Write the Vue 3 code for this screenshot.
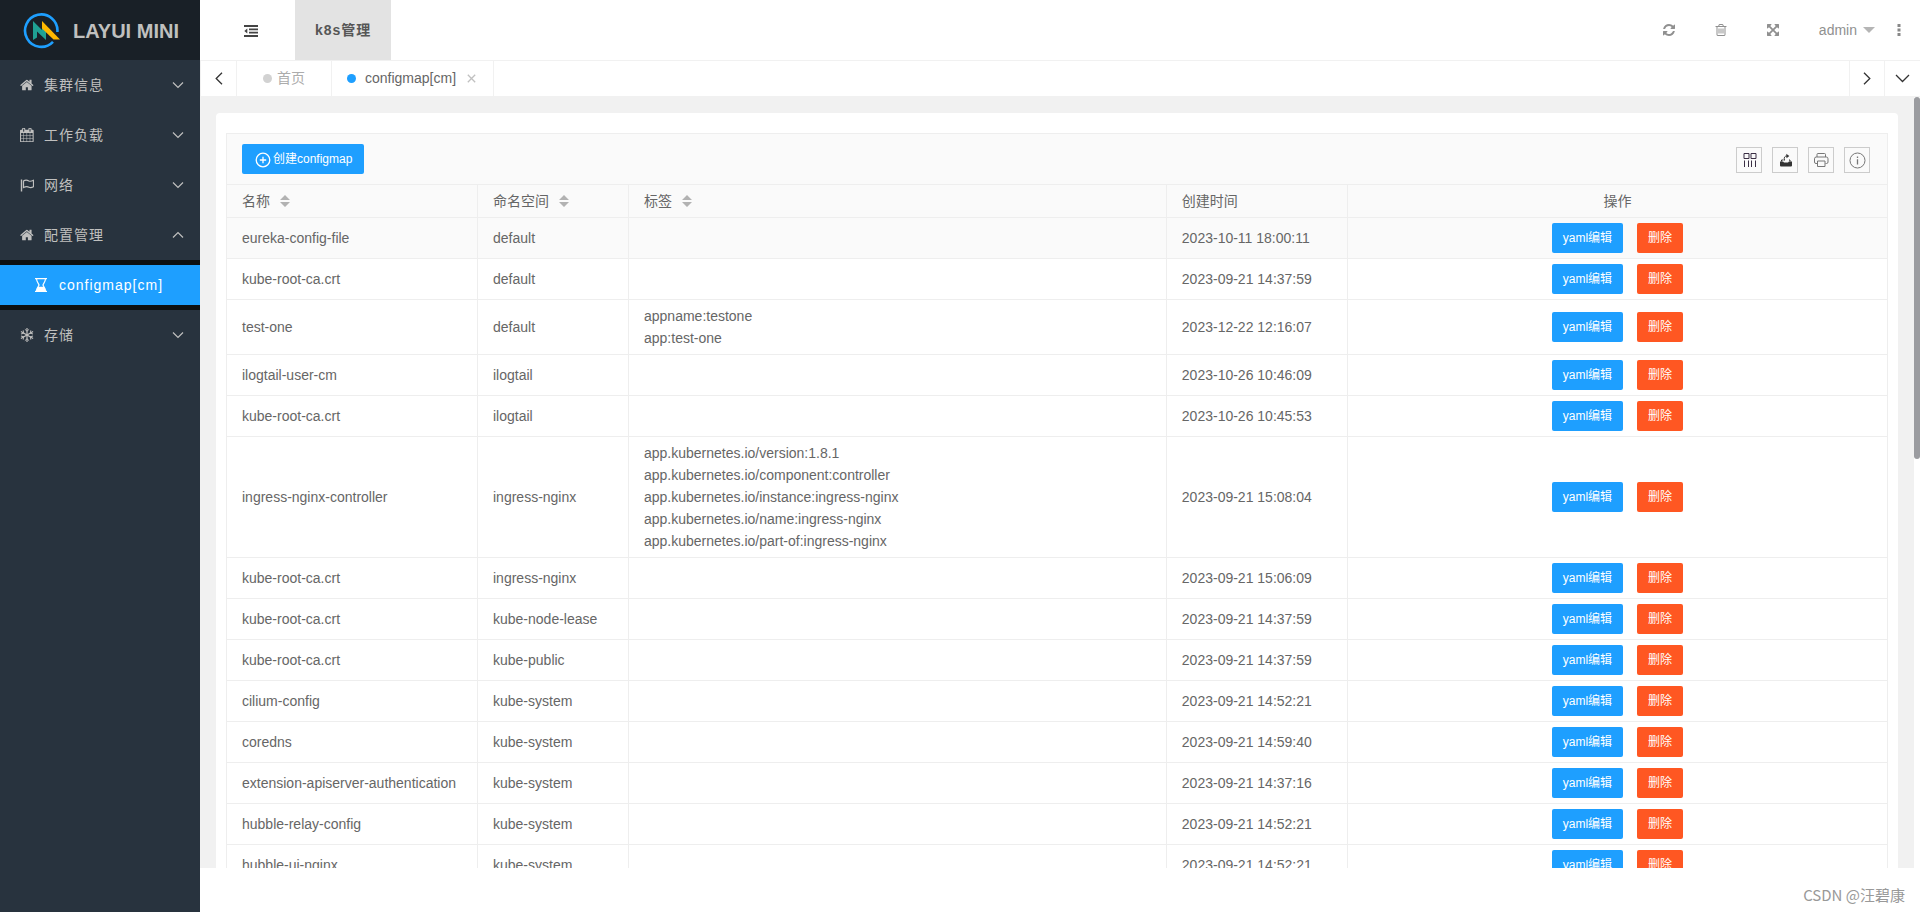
<script setup>
import { ref } from 'vue'

const menus = [
  { text: '集群信息', icon: 'home' },
  { text: '工作负载', icon: 'calendar' },
  { text: '网络', icon: 'flag' },
  { text: '配置管理', icon: 'home', open: true, children: ['configmap[cm]'] },
  { text: '存储', icon: 'snow' },
]

const icons = {
  home: 'M1472 992v480q0 26-19 45t-45 19h-384v-384h-256v384h-384q-26 0-45-19t-19-45v-480q0-1 .5-3t.5-3l575-474 575 474q1 2 1 6zm223-69l-62 74q-8 9-21 11h-3q-13 0-21-7l-692-577-692 577q-12 8-24 7-13-2-21-11l-62-74q-8-10-7-23.5t11-21.5l719-599q32-26 76-26t76 26l244 204v-195q0-14 9-23t23-9h192q14 0 23 9t9 23v408l219 182q10 8 11 21.5t-7 23.5z',
  calendar: 'M192 1664h288v-288h-288v288zm352 0h320v-288h-320v288zm-352-352h288v-320h-288v320zm352 0h320v-320h-320v320zm-352-384h288v-288h-288v288zm736 736h320v-288h-320v288zm-384-736h320v-288h-320v288zm768 736h288v-288h-288v288zm-384-352h320v-320h-320v320zm-352-864v-288q0-13-9.5-22.5t-22.5-9.5h-64q-13 0-22.5 9.5t-9.5 22.5v288q0 13 9.5 22.5t22.5 9.5h64q13 0 22.5-9.5t9.5-22.5zm736 864h288v-320h-288v320zm-384-384h320v-288h-320v288zm384 0h288v-288h-288v288zm32-480v-288q0-13-9.5-22.5t-22.5-9.5h-64q-13 0-22.5 9.5t-9.5 22.5v288q0 13 9.5 22.5t22.5 9.5h64q13 0 22.5-9.5t9.5-22.5zm384-64v1280q0 52-38 90t-90 38h-1408q-52 0-90-38t-38-90v-1280q0-52 38-90t90-38h128v-96q0-66 47-113t113-47h64q66 0 113 47t47 113v96h384v-96q0-66 47-113t113-47h64q66 0 113 47t47 113v96h128q52 0 90 38t38 90z',
  refresh: 'M1639 1056q0 5-1 7-64 268-268 434.5t-478 166.5q-146 0-282.5-55t-243.5-157l-129 129q-19 19-45 19t-45-19-19-45v-448q0-26 19-45t45-19h448q26 0 45 19t19 45-19 45l-137 137q71 66 161 102t187 36q134 0 250-65t186-179q11-17 53-117 8-23 30-23h192q13 0 22.5 9.5t9.5 22.5zm25-800v448q0 26-19 45t-45 19h-448q-26 0-45-19t-19-45 19-45l138-138q-148-137-349-137-134 0-250 65t-186 179q-11 17-53 117-8 23-30 23h-199q-13 0-22.5-9.5t-9.5-22.5v-7q65-268 270-434.5t480-166.5q146 0 284 55.5t245 156.5l130-129q19-19 45-19t45 19 19 45z',
  trash: 'M704 736v576q0 14-9 23t-23 9h-64q-14 0-23-9t-9-23v-576q0-14 9-23t23-9h64q14 0 23 9t9 23zm256 0v576q0 14-9 23t-23 9h-64q-14 0-23-9t-9-23v-576q0-14 9-23t23-9h64q14 0 23 9t9 23zm256 0v576q0 14-9 23t-23 9h-64q-14 0-23-9t-9-23v-576q0-14 9-23t23-9h64q14 0 23 9t9 23zm128 724v-948h-896v948q0 22 7 40.5t14.5 27 10.5 8.5h832q3 0 10.5-8.5t14.5-27 7-40.5zm-672-1076h448l-48-117q-7-9-17-11h-317q-10 2-17 11zm928 32v64q0 14-9 23t-23 9h-96v948q0 83-47 143.5t-113 60.5h-832q-66 0-113-58.5t-47-141.5v-952h-96q-14 0-23-9t-9-23v-64q0-14 9-23t23-9h309l70-167q15-37 54-63t79-26h320q40 0 79 26t54 63l70 167h309q14 0 23 9t9 23z',
  full: 'M1411 541l-355 355 355 355 144-144q29-31 70-14 39 17 39 59v448q0 26-19 45t-45 19h-448q-42 0-59-40-17-39 14-69l144-144-355-355-355 355 144 144q31 30 14 69-17 40-59 40h-448q-26 0-45-19t-19-45v-448q0-42 40-59 39-17 69 14l144 144 355-355-355-355-144 144q-19 19-45 19-12 0-24-5-40-17-40-59v-448q0-26 19-45t45-19h448q42 0 59 40 17 39-14 69l-144 144 355 355 355-355-144-144q-31-30-14-69 17-40 59-40h448q26 0 45 19t19 45v448q0 42-39 59-13 5-25 5-26 0-45-19z',
}

const actions = [
  { icon: 'refresh', label: '刷新' },
  { icon: 'trash', label: '清理' },
  { icon: 'full', label: '全屏' },
]

const columns = [
  { title: '名称', sort: true },
  { title: '命名空间', sort: true },
  { title: '标签', sort: true },
  { title: '创建时间' },
  { title: '操作', center: true },
]

const rows = ref([
  { name: 'eureka-config-file', ns: 'default', labels: [], time: '2023-10-11 18:00:11', hover: true },
  { name: 'kube-root-ca.crt', ns: 'default', labels: [], time: '2023-09-21 14:37:59' },
  { name: 'test-one', ns: 'default', labels: ['appname:testone', 'app:test-one'], time: '2023-12-22 12:16:07' },
  { name: 'ilogtail-user-cm', ns: 'ilogtail', labels: [], time: '2023-10-26 10:46:09' },
  { name: 'kube-root-ca.crt', ns: 'ilogtail', labels: [], time: '2023-10-26 10:45:53' },
  {
    name: 'ingress-nginx-controller',
    ns: 'ingress-nginx',
    labels: [
      'app.kubernetes.io/version:1.8.1',
      'app.kubernetes.io/component:controller',
      'app.kubernetes.io/instance:ingress-nginx',
      'app.kubernetes.io/name:ingress-nginx',
      'app.kubernetes.io/part-of:ingress-nginx',
    ],
    time: '2023-09-21 15:08:04',
  },
  { name: 'kube-root-ca.crt', ns: 'ingress-nginx', labels: [], time: '2023-09-21 15:06:09' },
  { name: 'kube-root-ca.crt', ns: 'kube-node-lease', labels: [], time: '2023-09-21 14:37:59' },
  { name: 'kube-root-ca.crt', ns: 'kube-public', labels: [], time: '2023-09-21 14:37:59' },
  { name: 'cilium-config', ns: 'kube-system', labels: [], time: '2023-09-21 14:52:21' },
  { name: 'coredns', ns: 'kube-system', labels: [], time: '2023-09-21 14:59:40' },
  { name: 'extension-apiserver-authentication', ns: 'kube-system', labels: [], time: '2023-09-21 14:37:16' },
  { name: 'hubble-relay-config', ns: 'kube-system', labels: [], time: '2023-09-21 14:52:21' },
  { name: 'hubble-ui-nginx', ns: 'kube-system', labels: [], time: '2023-09-21 14:52:21' },
])
</script>

<template>
  <div class="layout">
    <aside class="side">
      <a class="logo" href="#">
        <svg width="40" height="40" viewBox="0 0 40 40" aria-hidden="true">
          <path d="M35.4 21A16.2 16.2 0 1 0 31 30.800" fill="none" stroke="#1e9fff" stroke-width="2.6" />
          <path d="M11 10L20 19V15L24 19.500V29L15 20.500V26.500L11 29Z" fill="#1fa193" />
          <path d="M20 10L38 28.500H31.500L20 17.500Z" fill="#ffb800" />
        </svg>
        <h1>LAYUI MINI</h1>
      </a>
      <nav>
        <template v-for="(m, i) in menus" :key="i">
          <a class="menu" href="#">
            <svg class="menu-icon" width="14" height="14" viewBox="0 0 14 14" aria-hidden="true">
              <g v-if="m.icon === 'flag'" fill="none" stroke="currentColor">
                <path d="M1.500 1.500V13.500" stroke-width="1.400" />
                <path d="M3.500 3C6 1.300 7.500 2.200 9 3C10.500 3.700 12 3 13.500 2.300V8.700C12 9.500 10.500 10 9 9.200C7.500 8.400 6 8.200 3.500 9.600Z" stroke-width="1.200" />
              </g>
              <g v-else-if="m.icon === 'snow'" fill="none" stroke="currentColor">
                <g v-for="a in [0, 60, 120, 180, 240, 300]" :key="a" :transform="`rotate(${a} 7 7)`">
                  <path d="M7 7V0" stroke-width="1.200" />
                  <path d="M4.900 1.300L7 3.200L9.100 1.300" stroke-width=".9" />
                </g>
              </g>
              <path v-else :d="icons[m.icon]" transform="translate(-.5 -.3) scale(.0082)" fill="currentColor" />
            </svg>
            <span class="menu-text">{{ m.text }}</span>
            <svg class="arrow" width="12" height="8" viewBox="0 0 12 8" aria-hidden="true">
              <path :d="m.open ? 'M1 6.500L6 1.500L11 6.500' : 'M1 1.500L6 6.500L11 1.500'" />
            </svg>
          </a>
          <div v-if="m.open" class="submenu">
            <a v-for="c in m.children" :key="c" class="sub" href="#">
              <svg width="14" height="14" viewBox="0 0 14 14" aria-hidden="true">
                <path d="M1 .6H13M1 13.400H13" stroke="#fff" stroke-width="1.200" />
                <path d="M2.600 1C2.600 4.500 5 6 5 7S2.600 9.500 2.600 13M11.400 1C11.400 4.500 9 6 9 7S11.400 9.500 11.400 13" fill="none" stroke="#fff" stroke-width="1.200" />
                <path d="M2.500 13C2.600 11 3.300 9.800 4.300 8.700H9.700C10.700 9.800 11.400 11 11.500 13Z" fill="#fff" />
              </svg>
              <span>{{ c }}</span>
            </a>
          </div>
        </template>
      </nav>
    </aside>

    <div class="main">
      <header class="header">
        <button class="fold" type="button" aria-label="折叠菜单">
          <svg width="14" height="12" viewBox="0 0 14 12" aria-hidden="true">
            <path d="M0 1H14M5 4.300H14M5 7.700H14M0 11H14" stroke="#444" stroke-width="1.800" />
            <path d="M3.300 3.400V8.600L.3 6Z" fill="#444" />
          </svg>
        </button>
        <a class="module" href="#">k8s管理</a>
        <div class="tools">
          <button v-for="a in actions" :key="a.icon" type="button" class="tool" :aria-label="a.label">
            <svg width="14" height="14" viewBox="0 0 1792 1792" aria-hidden="true"><path :d="icons[a.icon]" fill="currentColor" /></svg>
          </button>
          <a class="user" href="#">admin<i class="caret"></i></a>
          <button type="button" class="more" aria-label="更多">
            <svg width="4" height="12" viewBox="0 0 4 12" aria-hidden="true">
              <path d="M.5 0h3v3h-3zM.5 4.500h3v3h-3zM.5 9h3v3h-3z" fill="#888" />
            </svg>
          </button>
        </div>
      </header>

      <div class="tabs">
        <button class="roll" type="button" aria-label="向左">
          <svg width="8" height="13" viewBox="0 0 8 13"><path d="M7 .8L1.200 6.500L7 12.200" /></svg>
        </button>
        <a class="tab home" href="#"><i class="dot"></i>首页</a>
        <a class="tab current" href="#">
          <i class="dot"></i>configmap[cm]
          <svg class="close" width="9" height="9" viewBox="0 0 9 9"><path d="M.8 .8L8.200 8.200M8.200 .8L.8 8.200" /></svg>
        </a>
        <button class="roll right" type="button" aria-label="向右">
          <svg width="8" height="13" viewBox="0 0 8 13"><path d="M1 .8L6.800 6.500L1 12.200" /></svg>
        </button>
        <button class="roll last" type="button" aria-label="标签操作">
          <svg width="15" height="9" viewBox="0 0 15 9"><path d="M1 1L7.500 7.500L14 1" /></svg>
        </button>
      </div>

      <main class="body">
        <section class="card">
          <div class="view">
            <div class="toolbar">
              <button class="btn create" type="button">
                <svg width="16" height="16" viewBox="0 0 16 16" aria-hidden="true">
                  <circle cx="8" cy="8" r="6.800" /><path d="M8 4.800V11.200M4.800 8H11.200" />
                </svg>
                创建configmap
              </button>
              <div class="boxes">
                <button class="box" type="button" aria-label="筛选列">
                  <svg width="16" height="16" viewBox="0 0 16 16"><path d="M3 1.500H8V6.500H3ZM10 1.500H15V6.500H10ZM3.500 8.500V15M7.500 8.500V15M10.500 8.500V15M14.500 8.500V15" fill="none" stroke="#3b2f45" /></svg>
                </button>
                <button class="box" type="button" aria-label="导出">
                  <svg width="16" height="16" viewBox="0 0 16 16"><path d="M3 9.500H6L7 10.500H11L12 9.500H15V13.500Q15 14.500 14 14.500H4Q3 14.500 3 13.500Z" fill="#333" /><path d="M4.500 9.500V8H6.500M12 8H13V9.500M7.500 8.500C6.800 5.500 7.500 4 10 4" fill="none" stroke="#333" /><path d="M9.300 1.800L12.300 4L9.500 6.200Z" fill="#333" /></svg>
                </button>
                <button class="box" type="button" aria-label="打印">
                  <svg width="16" height="16" viewBox="0 0 16 16" fill="none" stroke="#777"><path d="M4 5V2.500Q4 1.500 5 1.500H11.500Q12.500 1.500 12.500 2.500V5M4 11.500H3Q1.500 11.500 1.500 10V6.800Q1.500 5 3.200 5H13.300Q15 5 15 6.800V10Q15 11.500 13.500 11.500H12.500M4.500 9H12V14.500H4.500Z" /></svg>
                </button>
                <button class="box" type="button" aria-label="提示">
                  <svg width="18" height="18" viewBox="0 0 18 18" fill="none" stroke="#777"><circle cx="9.500" cy="9.500" r="7.500" /><path d="M9.500 8.300V13.500M9.500 5.500V7" stroke-width="1.300" /></svg>
                </button>
              </div>
            </div>
            <table>
              <colgroup><col class="c-name" /><col class="c-ns" /><col class="c-label" /><col class="c-time" /><col /></colgroup>
              <thead>
                <tr>
                  <th v-for="c in columns" :key="c.title" :class="{ center: c.center }">
                    {{ c.title }}
                    <svg v-if="c.sort" class="sort" width="10" height="12" viewBox="0 0 10 12"><path d="M0 5L5 0L10 5ZM0 7H10L5 12Z" /></svg>
                  </th>
                </tr>
              </thead>
              <tbody>
                <tr v-for="(r, i) in rows" :key="i" :class="{ hover: r.hover }">
                  <td>{{ r.name }}</td>
                  <td>{{ r.ns }}</td>
                  <td><div v-for="l in r.labels" :key="l">{{ l }}</div></td>
                  <td>{{ r.time }}</td>
                  <td>
                    <div class="ops">
                      <button class="btn" type="button">yaml编辑</button>
                      <button class="btn danger" type="button">删除</button>
                    </div>
                  </td>
                </tr>
              </tbody>
            </table>
          </div>
        </section>
        <div class="track"><div class="thumb"></div></div>
      </main>

      <footer class="footer">CSDN @汪碧康</footer>
    </div>
  </div>
</template>

<style>
body {
  margin: 0;
}
</style>

<style scoped>
.layout {
  display: flex;
  height: 100vh;
  overflow: hidden;
  background: #fff;
  color: #666;
  font: 14px/22px "Liberation Sans", "Noto Sans CJK SC", sans-serif;
}
* {
  box-sizing: border-box;
}
a {
  color: inherit;
  text-decoration: none;
}
button {
  margin: 0;
  padding: 0;
  border: 0;
  background: none;
  color: inherit;
  font: inherit;
  cursor: pointer;
}
svg {
  flex: none;
  display: block;
}
.side {
  flex: none;
  width: 200px;
  background: #28333e;
  color: #c0c0bf;
}
.logo {
  display: flex;
  align-items: center;
  gap: 11px;
  height: 60px;
  padding: 2px 0 0 22px;
  background: #192027;
}
.logo h1 {
  margin: 0;
  font-size: 20px;
  line-height: 24px;
  white-space: nowrap;
}
.menu {
  display: flex;
  align-items: center;
  height: 50px;
  padding: 0 16px 0 20px;
  letter-spacing: 1px;
}
.menu-text {
  flex: 1;
  padding-left: 10px;
}
.arrow path {
  fill: none;
  stroke: #c0c0bf;
  stroke-width: 1.2;
}
.submenu {
  padding: 5px 0;
  background: #0c0f13;
}
.sub {
  display: flex;
  align-items: center;
  gap: 11px;
  height: 40px;
  padding-left: 34px;
  background: #1e9fff;
  color: #fff;
  letter-spacing: 1px;
}
.main {
  flex: 1;
  min-width: 0;
  display: flex;
  flex-direction: column;
}
.header {
  flex: none;
  display: flex;
  height: 60px;
}
.fold {
  width: 95px;
  padding: 2px 0 0 44px;
}
.module {
  padding: 0 20px;
  background: #e3e3e3;
  color: #565656;
  font-weight: bold;
  line-height: 60px;
  letter-spacing: 1px;
}
.tools {
  display: flex;
  align-items: center;
  margin-left: auto;
  color: #909090;
}
.tool {
  display: flex;
  justify-content: center;
  width: 52px;
}
.user {
  display: flex;
  align-items: center;
  gap: 6px;
  padding-left: 20px;
}
.caret {
  border: 6px solid transparent;
  border-top-color: #b5b5b5;
  border-bottom: 0;
}
.more {
  padding: 0 19px 0 22px;
}
.tabs {
  flex: none;
  display: flex;
  height: 37px;
  border: solid #f1f1f1;
  border-width: 1px 0 1px 1px;
}
.tabs path {
  fill: none;
  stroke: #333;
  stroke-width: 1.3;
}
.roll {
  display: flex;
  align-items: center;
  justify-content: center;
  width: 36px;
  border-right: 1px solid #f1f1f1;
}
.right {
  margin-left: auto;
  border-left: 1px solid #f1f1f1;
}
.last {
  width: 35px;
  border: 0;
}
.tab {
  display: flex;
  align-items: center;
  padding-bottom: 2px;
  border-right: 1px solid #f1f1f1;
}
.home {
  gap: 5px;
  padding-left: 26px;
  padding-right: 26px;
  color: #acacac;
}
.current {
  gap: 9px;
  padding-left: 15px;
  padding-right: 17px;
}
.dot {
  width: 9px;
  height: 9px;
  margin-top: 1px;
  border-radius: 50%;
  background: #d2d2d2;
}
.current .dot {
  background: #1e9fff;
}
.tabs .close {
  margin: 2px 0 0 2px;
}
.tabs .close path {
  stroke: #c0c0c0;
}
.body {
  position: relative;
  flex: 1;
  min-height: 0;
  overflow: hidden;
  padding: 16px 22px 0 16px;
  background: #f1f1f1;
}
.card {
  padding: 20px 10px;
  border-radius: 4px;
  background: #fff;
}
.view {
  border: 1px solid #eee;
}
.toolbar {
  display: flex;
  align-items: center;
  justify-content: space-between;
  height: 51px;
  padding: 0 17px 0 15px;
  border-bottom: 1px solid #eee;
  background: #fafafa;
}
.btn {
  height: 30px;
  padding: 1px 11px 0;
  border-radius: 2px;
  background: #1e9fff;
  color: #fff;
  font-size: 12px;
  line-height: 29px;
  white-space: nowrap;
}
.create {
  display: flex;
  align-items: center;
  gap: 2px;
  padding: 1px 12px 0 13px;
}
.create svg {
  fill: none;
  stroke: #fff;
  stroke-width: 1.3;
}
.danger {
  background: #ff5722;
}
.boxes {
  display: flex;
  gap: 10px;
  padding-top: 2px;
}
.box {
  display: flex;
  align-items: center;
  justify-content: center;
  width: 26px;
  height: 26px;
  border: 1px solid #ccc;
}
table {
  width: 100%;
  table-layout: fixed;
  border-collapse: separate;
  border-spacing: 0;
}
.c-name {
  width: 251px;
}
.c-ns {
  width: 151px;
}
.c-label {
  width: 32.4%;
}
.c-time {
  width: 181px;
}
th,
td {
  padding: 5px 15px;
  border: solid #eee;
  border-width: 0 1px 1px 0;
  text-align: left;
  font-weight: normal;
  vertical-align: middle;
}
th:last-child,
td:last-child {
  border-right: 0;
}
thead,
.hover {
  background: #fafafa;
}
th.center {
  text-align: center;
}
.sort {
  display: inline-block;
  margin-left: 6px;
  vertical-align: -1px;
  fill: #b2b2b2;
}
.ops {
  display: flex;
  justify-content: center;
  gap: 14px;
}
.track {
  position: absolute;
  top: 0;
  right: 0;
  width: 6px;
  height: 100%;
  background: #fff;
}
.thumb {
  height: 47%;
  border-radius: 3px;
  background: #9b9ca0;
}
.footer {
  flex: none;
  height: 44px;
  padding-right: 15px;
  color: #999;
  font: 15px/54px "Noto Sans CJK SC", sans-serif;
  text-align: right;
}
</style>
